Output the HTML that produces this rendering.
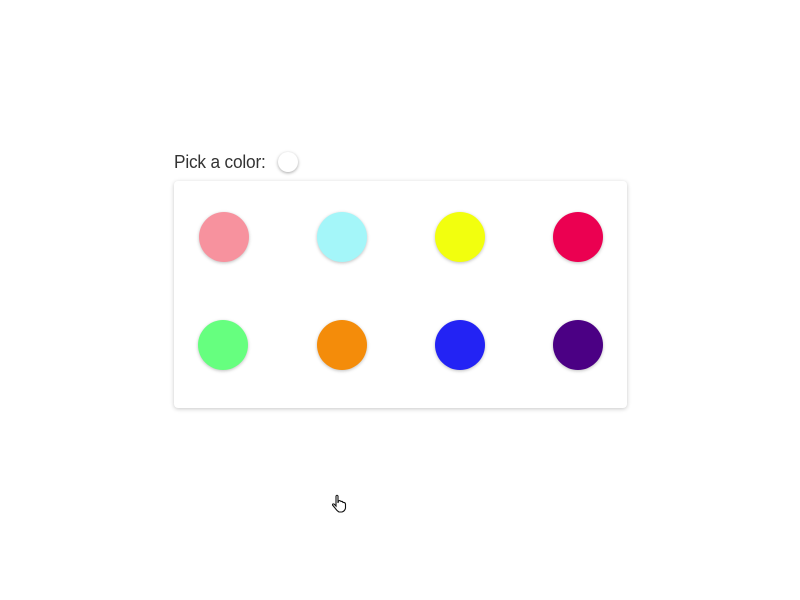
<!DOCTYPE html>
<html><head><style>
body{margin:0;width:800px;height:600px;background:#fff;position:relative;overflow:hidden;font-family:"Liberation Sans",sans-serif}
.lbl{position:absolute;left:174px;top:152px;font-size:18px;color:#333;letter-spacing:-0.2px;transform:scaleX(0.96);transform-origin:left}
.sw{position:absolute;left:278px;top:152px;width:20px;height:20px;border-radius:50%;background:#fff;box-shadow:0 1px 3px rgba(0,0,0,.35)}
.card{position:absolute;left:174px;top:181px;width:453px;height:227px;background:#fff;border-radius:4px;box-shadow:0 1px 4px rgba(0,0,0,.22)}
.c{position:absolute;width:50px;height:50px;border-radius:50%;box-shadow:0 1px 3px rgba(0,0,0,.25)}
</style></head><body>
<div class="lbl">Pick a color:</div>
<div class="sw"></div>
<div class="card"></div>
<div class="c" style="left:199px;top:212px;background:#f7929e"></div>
<div class="c" style="left:317px;top:212px;background:#a4f6f9"></div>
<div class="c" style="left:435px;top:212px;background:#f2ff0e"></div>
<div class="c" style="left:553px;top:212px;background:#eb0051"></div>
<div class="c" style="left:198px;top:320px;background:#66ff7f"></div>
<div class="c" style="left:317px;top:320px;background:#f48c0a"></div>
<div class="c" style="left:435px;top:320px;background:#2323f4"></div>
<div class="c" style="left:553px;top:320px;background:#4b0084"></div>
<svg style="position:absolute;left:331px;top:494px" width="18" height="20" viewBox="0 0 18 20"><path d="M5 2 Q6 0.5 7 2 L7 9 L7.5 7 Q9 6 10 7.5 Q11.5 7 12 8.5 Q14 8 14.5 10 L14.5 14 Q14 17 11 18 L8 18 Q6 17 4 14 L1.5 11 Q1.5 9.5 3 10 L5 12 Z" fill="#fff" stroke="#111" stroke-width="1.1"/></svg>
</body></html>
